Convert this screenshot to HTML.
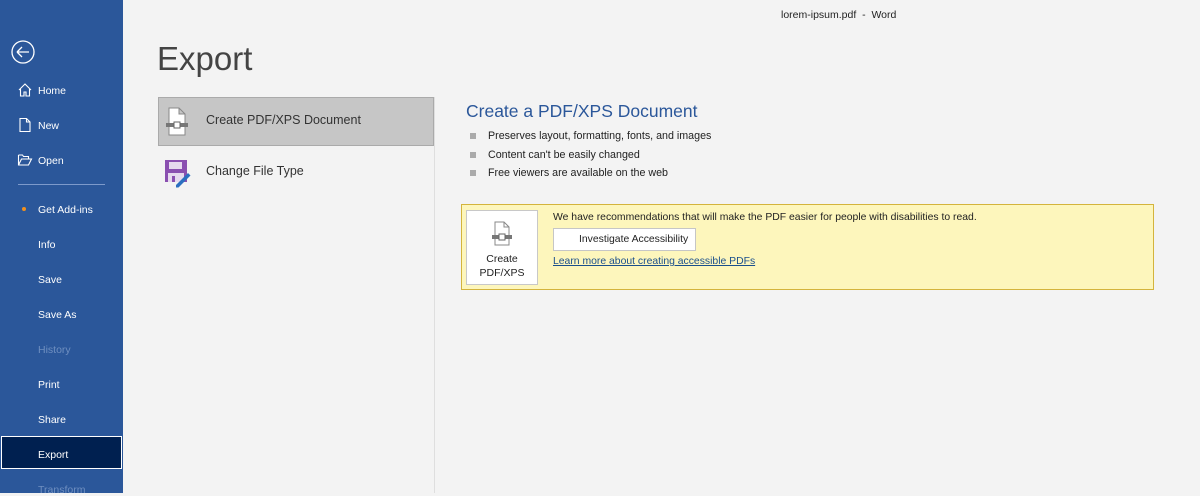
<!DOCTYPE html>
<html><head><meta charset="utf-8"><style>
*{margin:0;padding:0;box-sizing:border-box}
body{width:1200px;height:493px;overflow:hidden;background:#f3f3f3;font-family:"Liberation Sans",sans-serif;position:relative;color:#222}
#side{position:absolute;left:0;top:0;width:123px;height:493px;background:#2b579a;color:#fff;font-size:10.5px}
.it{position:absolute;left:38px}
.ic{position:absolute;left:17px}
#exp{position:absolute;left:1px;top:436px;width:121px;height:33px;background:#002050;border:1px solid #fff}
.dim{color:#6f8fc0}
.abs{position:absolute}
</style></head><body>
<div id="side">
<svg class="abs" style="left:10px;top:39px" width="26" height="26"><circle cx="13" cy="13" r="11" fill="none" stroke="#fff" stroke-width="1.3"/><path d="M7 13h12M7 13l5-5M7 13l5 5" stroke="#fff" stroke-width="1.3" fill="none"/></svg>
<svg class="ic" style="top:82px" width="16" height="16"><path d="M2 8L8 2l6 6M3.5 7v7h3.5v-4h2v4h3.5V7" fill="none" stroke="#fff" stroke-width="1.1"/></svg>
<div class="it" style="top:85px">Home</div>
<svg class="ic" style="top:117px" width="16" height="16"><path d="M3 1.5h6.5l3.5 3.5v9.5H3z M9.5 1.5V5H13" fill="none" stroke="#fff" stroke-width="1.1"/></svg>
<div class="it" style="top:120px">New</div>
<svg class="ic" style="top:152px" width="16" height="16"><path d="M1.5 3h4l1 1.5h5V7 M1.5 3v10h10l3-6H4.5l-3 6" fill="none" stroke="#fff" stroke-width="1.1"/></svg>
<div class="it" style="top:155px">Open</div>
<div class="abs" style="left:18px;top:184px;width:87px;height:1px;background:#7d9acb"></div>
<div class="abs" style="left:22px;top:207px;width:4px;height:4px;border-radius:2px;background:#f0901e"></div>
<div class="it" style="top:204px">Get Add-ins</div>
<div class="it" style="top:239px">Info</div>
<div class="it" style="top:274px">Save</div>
<div class="it" style="top:309px">Save As</div>
<div class="it dim" style="top:344px">History</div>
<div class="it" style="top:379px">Print</div>
<div class="it" style="top:414px">Share</div>
<div id="exp"></div>
<div class="it" style="top:449px">Export</div>
<div class="it dim" style="top:484px">Transform</div>
</div>
<div class="abs" style="left:781px;top:9px;font-size:10.5px">lorem-ipsum.pdf&nbsp; - &nbsp;Word</div>
<div class="abs" style="left:157px;top:40px;font-size:33px;color:#444">Export</div>
<div class="abs" style="left:434px;top:97px;width:1px;height:396px;background:#dedede"></div>
<div class="abs" style="left:158px;top:97px;width:276px;height:49px;background:#c6c6c6;border:1px solid #aaa"></div>
<svg class="abs" style="left:165px;top:107px" width="24" height="30"><path d="M4 1h10l6 6v21H4z M14 1v6h6" fill="#fff" stroke="#888"/><rect x="1" y="16" width="22" height="4" fill="#777"/><rect x="9" y="15" width="6" height="6" fill="#fff" stroke="#666"/></svg>
<div class="abs" style="left:206px;top:113px;font-size:12.5px;color:#333">Create PDF/XPS Document</div>
<svg class="abs" style="left:163px;top:158px" width="30" height="30"><rect x="2" y="2" width="22" height="22" fill="#8a4fb0"/><rect x="6" y="4" width="13" height="7" fill="#e6d9ee"/><rect x="5" y="15" width="16" height="9" fill="#e6d9ee"/><rect x="9" y="18" width="3" height="6" fill="#8a4fb0"/><path d="M13 27l12-12 2.5 2.5-12 12h-2.5z" fill="#2b6fc0"/></svg>
<div class="abs" style="left:206px;top:164px;font-size:12.5px;color:#333">Change File Type</div>
<div class="abs" style="left:466px;top:101px;font-size:17.5px;color:#2b579a">Create a PDF/XPS Document</div>
<div class="abs" style="left:470px;top:127px;font-size:10.7px;line-height:18.5px">
<div><span style="display:inline-block;width:6px;height:6px;background:#aaa;margin-right:12px"></span>Preserves layout, formatting, fonts, and images</div>
<div><span style="display:inline-block;width:6px;height:6px;background:#aaa;margin-right:12px"></span>Content can't be easily changed</div>
<div><span style="display:inline-block;width:6px;height:6px;background:#aaa;margin-right:12px"></span>Free viewers are available on the web</div>
</div>
<div class="abs" style="left:461px;top:204px;width:693px;height:86px;background:#fdf6bc;border:1px solid #d4b43c"></div>
<div class="abs" style="left:466px;top:210px;width:72px;height:75px;background:#fff;border:1px solid #c8c8c8;font-size:10.5px;text-align:center;padding-top:41px;line-height:14px">Create<br>PDF/XPS</div>
<svg class="abs" style="left:490px;top:221px" width="24" height="26"><path d="M5 1h9l5 5v18H5z M14 1v5h5" fill="#fff" stroke="#888"/><rect x="2" y="14" width="20" height="4" fill="#777"/><rect x="9" y="13" width="6" height="6" fill="#fff" stroke="#666"/></svg>
<div class="abs" style="left:553px;top:212px;font-size:10.4px">We have recommendations that will make the PDF easier for people with disabilities to read.</div>
<div class="abs" style="left:553px;top:228px;width:143px;height:23px;background:#fff;border:1px solid #c6c6c6;font-size:10.4px;padding:5px 0 0 25px">Investigate Accessibility</div>
<div class="abs" style="left:553px;top:256px;font-size:10.4px;color:#1a4f8c;text-decoration:underline">Learn more about creating accessible PDFs</div>
</body></html>
